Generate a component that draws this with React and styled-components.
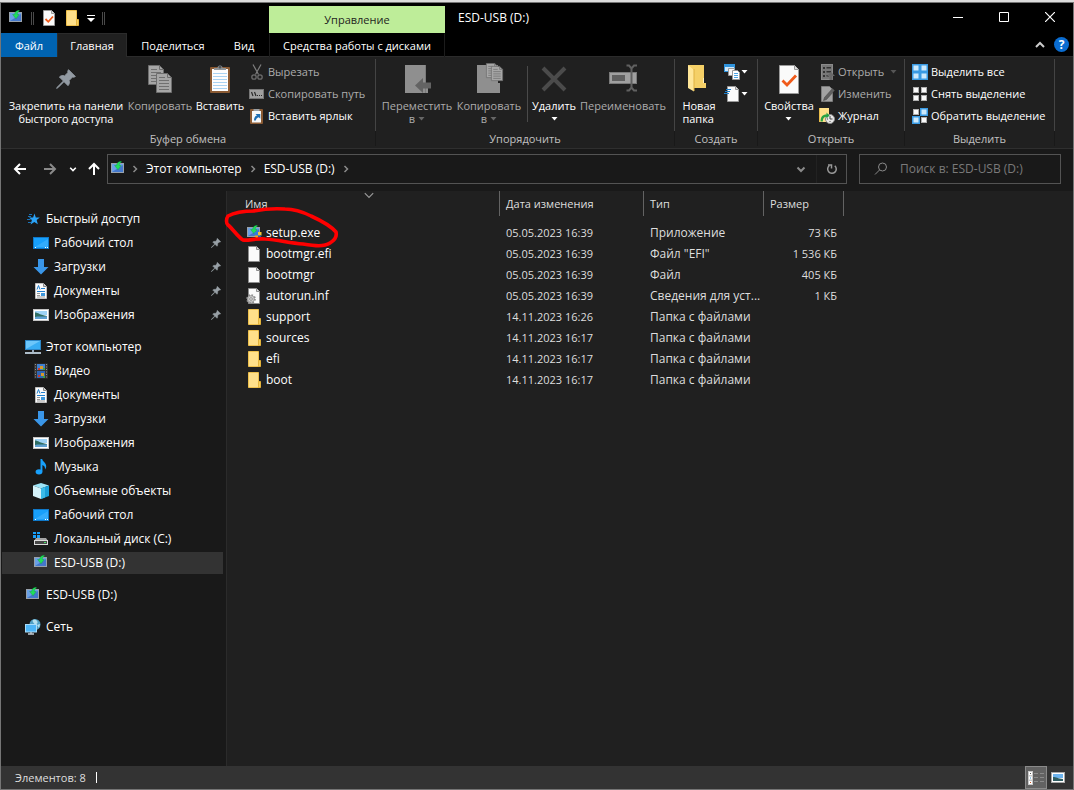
import React from 'react';
import styled, { createGlobalStyle, css } from 'styled-components';

const GlobalStyle = createGlobalStyle`
  *, *::before, *::after { box-sizing: border-box; }
  html, body { margin: 0; background: #191919; }
  body, button, input, table {
    font-family: "Open Sans", "Noto Sans", sans-serif;
    font-size: 12px;
    line-height: 16px;
    color: #fff;
  }
  button { margin: 0; padding: 0; border: 0; background: none; cursor: default; white-space: nowrap; }
  a { color: inherit; text-decoration: none; }
  svg { display: block; flex: none; }
`;

/* ---------- icons ---------- */

const Svg = ({ w = 16, h = w, vb, children }) => (
  <svg width={w} height={h} viewBox={vb || `0 0 ${w} ${h}`} fill="none" aria-hidden="true">
    {children}
  </svg>
);

const SetupIcon = ({ shield }) => (
  <Svg>
    <rect x="1.500" y="2.500" width="12" height="9" fill="#6aa0e6" stroke="#98a2ad" />
    <path d="M2 11L13 4v7z" fill="#4478cc" />
    <path d="M11 .2C8.200.6 6.800 2 6.600 4.500H4.600L8 8.800l3.200-4.300H9.200C9.300 3 9.800 1.700 11.500.9z" fill="#1fe05a" stroke="#0f9a3c" strokeWidth=".4" />
    {shield && (
      <g>
        <path d="M8.500 7H12v3.500H8.500z" fill="#2f7fe0" />
        <path d="M12 7h3.500v3.500H12z" fill="#f5c431" />
        <path d="M8.500 10.500H12V14Q9 13 8.500 10.500z" fill="#f5a31a" />
        <path d="M12 10.500h3.500Q15 13 12 14z" fill="#2360b8" />
      </g>
    )}
  </Svg>
);

const FolderIcon = () => (
  <Svg>
    <path d="M2.500.5h10v15h-10z" fill="#ffe08a" stroke="#eec04c" />
    <path d="M12.500 9.500h2v6h-2z" fill="#f6cf5f" stroke="#e3b33c" />
  </Svg>
);

const PageIcon = ({ gear }) => (
  <Svg>
    <path d="M2.500.5h8l3 3v12h-11z" fill="#fafafa" stroke="#8d8d8d" />
    <path d="M10.500.5v3h3" fill="#ddd" stroke="#8d8d8d" />
    {gear && (
      <g>
        <circle cx="5" cy="11" r="3.800" fill="#c4c4c4" stroke="#8a8a8a" strokeWidth="2" strokeDasharray="1.500 1.480" />
        <circle cx="5" cy="11" r="3.300" fill="#cfcfcf" stroke="#8a8a8a" strokeWidth=".6" />
        <circle cx="5" cy="11" r="1.300" fill="#fafafa" stroke="#777" strokeWidth=".8" />
      </g>
    )}
  </Svg>
);

const PropsSmallIcon = () => (
  <Svg>
    <path d="M2.500.5h8l3 3v12h-11z" fill="#fafafa" stroke="#999" />
    <path d="M10.500.5v3h3" fill="#ddd" stroke="#999" />
    <path d="M4.500 9l2.800 2.800L12 6.500" stroke="#f05a1a" strokeWidth="1.800" />
  </Svg>
);

const PinPath = ({ fill }) => (
  <path
    d="M10 .5L15.500 6l-1.300.6-1-.2-2.700 2.800c.5 1.600.2 3-.9 4.100L6.400 10.100 1.500 15 .5 15.500 1 14.500 5.900 9.600 2.700 6.400c1.100-1.100 2.500-1.400 4.100-.9l2.800-2.700-.2-1z"
    fill={fill}
    stroke={fill}
    strokeWidth=".7"
  />
);
const PinSmall = () => <Svg w={10} vb="0 0 16 16"><PinPath fill="#98a0a6" /></Svg>;
const PinLarge = () => (
  <Svg w={32}>
    <g transform="translate(6 6) scale(1.250)"><PinPath fill="#939ba3" /></g>
  </Svg>
);

const CopyDoc = ({ x, y }) => (
  <g transform={`translate(${x} ${y})`}>
    <path d="M.5.5h11l4 4v15H.5z" fill="#a6a6a6" stroke="#6e6e6e" />
    <path d="M11.500.5v4h4" stroke="#6e6e6e" />
    <path d="M3 4.500h6M3 7.500h10M3 10.500h10M3 13.500h10M3 16.500h10" stroke="#707070" />
  </g>
);
const CopyLarge = () => <Svg w={32}><CopyDoc x={4} y={2} /><CopyDoc x={12} y={10} /></Svg>;

const PasteLarge = () => (
  <Svg w={32}>
    <rect x="6" y="4" width="20" height="26" rx="1" fill="#8a5a33" />
    <path d="M8 6h16v22H8z" fill="#fdfdfd" />
    <path d="M9 10.500h14M9 13.500h14M9 16.500h14M9 19.500h14M9 22.500h14M9 25.500h14" stroke="#a9d3f3" />
    <path d="M10 7V5h3.500a2.500 2.500 0 015 0H22v2z" fill="#8e9499" />
    <circle cx="16" cy="4" r="1.500" fill="#4d5256" />
  </Svg>
);

const CutIcon = () => (
  <Svg>
    <path d="M4 .5l5.500 10M12 .5L6.500 10.500" stroke="#7f7f7f" strokeWidth="1.200" />
    <circle cx="5" cy="13" r="2.200" stroke="#6b6b6b" strokeWidth="1.300" />
    <circle cx="11" cy="13" r="2.200" stroke="#6b6b6b" strokeWidth="1.300" />
  </Svg>
);
const PathIcon = () => (
  <Svg>
    <rect x=".5" y="3.500" width="14" height="9" fill="#a0a0a0" stroke="#777" />
    <path d="M2.500 6l1.500 4M5.500 6L7 10" stroke="#2a2a2a" strokeWidth="1.200" />
    <path d="M8 9.500h1M10 9.500h1M12 9.500h1" stroke="#2a2a2a" />
  </Svg>
);
const ShortcutIcon = () => (
  <Svg>
    <rect x="1" y="1" width="13" height="15" rx="1" fill="#8a5a33" />
    <path d="M3 3h9v11.500H3z" fill="#f8f8f8" />
    <path d="M4.500 3V1h6v2z" fill="#999fa4" />
    <path d="M5 12.500c0-3 1-4.500 3-5L6.500 6h4.800v4.800L9.800 9.200C8 9.800 7 10.800 6.800 12.500z" fill="#1f6fb3" />
  </Svg>
);

const MoveLarge = () => (
  <Svg w={32}>
    <path d="M4 2h21v18h2v10H4z" fill="#8f8f8f" />
    <path d="M24.500 2v28" stroke="#7b7b7b" />
    <path d="M14 22.500L22 15v4.500h8v6h-8V30z" fill="#636363" />
  </Svg>
);
const CopyToLarge = () => (
  <Svg w={32}>
    <path d="M4 2h21v18h2v10H4z" fill="#8f8f8f" />
    <g transform="translate(13 0) scale(.75)"><CopyDoc x={0} y={0} /></g>
    <g transform="translate(18 3) scale(.75)"><CopyDoc x={0} y={0} /></g>
  </Svg>
);
const DeleteLarge = () => <Svg w={32}><path d="M5 5l22 22M27 5L5 27" stroke="#4b4b4b" strokeWidth="4" /></Svg>;
const RenameLarge = () => (
  <Svg w={32}>
    <rect x="2.500" y="9.500" width="27" height="11" fill="#a0a0a0" stroke="#7a7a7a" />
    <rect x="5" y="12" width="13" height="6" fill="#606060" />
    <path d="M24.500 6v19M19.500 2.500h2.500l2.500 3 2.500-3h3M19.500 27.500h2.500l2.500-3 2.500 3h3" stroke="#606060" strokeWidth="2" />
  </Svg>
);
const NewFolderLarge = () => (
  <Svg w={32}>
    <path d="M5 2h16v18h2v5H9z" fill="#f5d067" />
    <path d="M5 2l6 5v21.500L5 25z" fill="#ffe698" />
    <path d="M11 6v22" stroke="#dfb242" />
    <path d="M20.500 15v5" stroke="#fff1bd" />
  </Svg>
);
const NewItemIcon = () => (
  <Svg>
    <rect x=".5" y=".5" width="10" height="7" fill="#cfe8fa" stroke="#2f93dc" />
    <path d="M1 2h9" stroke="#2f93dc" strokeWidth="2" />
    <path d="M4.500 4.500h6v7h-6z" fill="#f4f4f4" stroke="#999" />
    <path d="M8.500 6.500h5l2 2v7h-7z" fill="#fff" stroke="#999" />
    <path d="M10 9.500h4M10 11.500h4M10 13.500h4" stroke="#4ba3e3" />
  </Svg>
);
const EasyAccessIcon = () => (
  <Svg>
    <path d="M3.500.5h8l3 3v12h-11z" fill="#fafafa" stroke="#999" />
    <path d="M11.500.5v3h3" fill="#ddd" stroke="#999" />
    <path d="M2 3.500h5M1 5.500h5M0 7.500h5" stroke="#1e7fc9" />
  </Svg>
);
const PropsLarge = () => (
  <Svg w={32}>
    <path d="M6.500 2.500h15l4 4v24h-19z" fill="#fafafa" stroke="#9a9a9a" />
    <path d="M21.500 2.500v4h4" fill="#ddd" stroke="#9a9a9a" />
    <path d="M9.500 17.500l4.500 4.500 9-9.500" stroke="#f05a1a" strokeWidth="2.800" />
  </Svg>
);
const OpenIcon = () => (
  <Svg>
    <rect x="2.500" y=".5" width="11" height="15" fill="#777" stroke="#8a8a8a" />
    <path d="M4 3h2v2H4zM4 7h2v2H4zM4 11h2v2H4zM7.500 3H12v1.500H7.500zM7.500 7H12v1.500H7.500zM7.500 11H10v1.500H7.500z" fill="#333" />
    <path d="M12 8l4 4h-2.500v4h-3v-4H8z" fill="#696969" />
  </Svg>
);
const EditIcon = () => (
  <Svg>
    <path d="M2.500.5h8l3 3v12h-11z" fill="#a3a3a3" stroke="#7b7b7b" />
    <path d="M13.500 2.500l2 2-8 9-3 1 1-3z" fill="#606060" stroke="#4a4a4a" strokeWidth=".6" />
  </Svg>
);
const HistoryIcon = () => (
  <Svg>
    <path d="M0 0h10v8l1 6H0z" fill="#ffe08a" />
    <path d="M.5 0v14" stroke="#e9bd4b" />
    <circle cx="11" cy="11" r="4.500" fill="#e8e8e8" stroke="#8b8b8b" />
    <path d="M11 8v3h2.500M11 14v-1M8 11h1" stroke="#444" />
    <path d="M1.500 13.500c0-4.500 2-7 6-7V4.500l3 3-3 3V8.800c-2.500 0-3.700 1.700-3.700 4.700z" fill="#27a243" />
  </Svg>
);

const SelectIcon = ({ kind }) => {
  const on = kind === 'all' ? [1, 1, 1, 1] : kind === 'none' ? [0, 0, 0, 0] : [0, 1, 1, 0];
  return (
    <Svg>
      {on.map((v, i) => {
        const x = (i % 2) * 8;
        const y = Math.floor(i / 2) * 8;
        return v ? (
          <g key={i}>
            <rect x={x} y={y} width="8" height="8" fill="#3a9be4" />
            <rect x={x + 1.5} y={y + 1.5} width="5" height="5" fill="#cde9fb" />
          </g>
        ) : (
          <rect key={i} x={x + 1.5} y={y + 1.5} width="5" height="5" fill="#fafafa" stroke="#b0b0b0" />
        );
      })}
    </Svg>
  );
};

const StarIcon = () => (
  <Svg>
    <path d="M9.500 2.500l1.300 4 4 .1-3.100 2.500 1.100 4.200-3.500-2.400-3.700 2.500 1.300-4.300L4 6.600l4.100-.1z" fill="#2ba3f7" />
    <path d="M4 3.500h3M3 5.500h3M2 8.500h3.500M3 11.500h3" stroke="#1b74b8" />
  </Svg>
);
const DesktopIcon = () => (
  <Svg>
    <rect x=".5" y="2.500" width="15" height="11" fill="#18a0fb" stroke="#0f78c8" />
    <path d="M2 12L15 4v8z" fill="#33acfc" />
    <path d="M2 12.500h1M12 12.500h1M14 12.500h1" stroke="#fff" />
  </Svg>
);
const DownloadIcon = () => <Svg><path d="M5 0h6v8h4.500L8 15.500.5 8H5z" fill="#3a96e8" /></Svg>;
const DocIcon = () => (
  <Svg>
    <path d="M2.500.5h8l3 3v12h-11z" fill="#fafafa" stroke="#c0c0c0" />
    <path d="M10.500.5v3h3" fill="#ccc" stroke="#888" />
    <path d="M4 6.500L5.500 2.500 7 6.500M8 5.500h4M4 8.500h8" stroke="#1f7fcf" />
    <path d="M4 10.500h3M4 12.500h3M4 14h8" stroke="#999" />
    <path d="M8 10h4v3H8z" fill="#3d97dc" />
  </Svg>
);
const PictureIcon = () => (
  <Svg>
    <rect x=".5" y="2.500" width="15" height="11" fill="#fff" stroke="#c4c4c4" />
    <path d="M2 4h12v4H2z" fill="#9fd3f5" />
    <path d="M2 5.500c3 0 5 2.500 12 3.500v2H2z" fill="#2f6d62" />
    <path d="M2 10c4-1 8 0 12-.8V12H2z" fill="#5fa0d0" />
  </Svg>
);
const PcIcon = () => (
  <Svg>
    <rect x=".5" y="1.500" width="15" height="9" fill="#6cc6fa" stroke="#2b86c7" />
    <path d="M1 10L15 2v8z" fill="#38adf4" />
    <path d="M7 11h2v2H7z" fill="#9ab" />
    <path d="M0 14h16" stroke="#aebdc9" strokeWidth="2" />
  </Svg>
);
const VideoIcon = () => (
  <Svg>
    <rect x="1" y=".5" width="14" height="15" fill="#333" />
    <path d="M2.500 1v14M13.500 1v14" stroke="#8f8f8f" strokeWidth="1" strokeDasharray="1 1.500" />
    <rect x="4" y="1" width="8" height="6" fill="#3f7fd0" />
    <rect x="4" y="8" width="8" height="7" fill="#2f66b5" />
    <path d="M7 3h3v3H7zM8 10h3v3H8z" fill="#d79a2b" />
    <path d="M5 5h2v2H5zM5 12h2v2H5z" fill="#c8392c" />
    <path d="M10 5h2v2h-2zM10 13h2v2h-2z" fill="#3f9e45" />
  </Svg>
);
const MusicIcon = () => (
  <Svg>
    <path d="M7.500 0h1.700c.3 2.800 4 3.600 4 7.300 0 1.300-.5 2.300-1.200 3.200.3-2.300-.7-3.900-2.600-4.500v6.500H7.500z" fill="#18a0fb" />
    <ellipse cx="6" cy="12.800" rx="3.400" ry="2.600" fill="#18a0fb" />
  </Svg>
);
const CubeIcon = () => (
  <Svg>
    <path d="M8 0l8 2.500L8 5.500 0 2.500z" fill="#9ce4f7" />
    <path d="M0 2.500l8 3V16l-8-3z" fill="#d5f2fa" />
    <path d="M16 2.500l-8 3V16l8-3z" fill="#1b9fd8" />
    <path d="M8 5.500l4-1.500v10.500L8 16z" fill="#3bbbe8" />
  </Svg>
);
const DiskIcon = () => (
  <Svg>
    <path d="M0 1h3v2H0zM4 1h3v2H4zM0 4h3v3H0zM4 4h3v3H4z" fill="#18a0fb" />
    <path d="M3 7h10l2 3H1z" fill="#a5a5a5" />
    <rect x="1.500" y="9.500" width="13" height="4" fill="#484848" stroke="#dcdcdc" />
    <path d="M11 11.500h2" stroke="#4be36a" />
  </Svg>
);
const NetworkIcon = () => (
  <Svg>
    <circle cx="10" cy="5.500" r="5.500" fill="#4f9fc4" />
    <path d="M8 1c2-1 4 0 4.500 2S10 6 9 4.500 7 2 8 1zM12 6l3-1-1 4z" fill="#b5e0ef" />
    <rect x=".5" y="5.500" width="11" height="7.500" fill="#4db5f7" stroke="#a9dcfa" />
    <path d="M3 15h6M6 13v2" stroke="#c3ccd3" strokeWidth="1.300" />
  </Svg>
);

const Chevron = ({ dir = 'down', w = 10, stroke = '#fff', sw = 2 }) => (
  <svg width={w} height={w} viewBox="0 0 10 10" fill="none" aria-hidden="true">
    <path
      d={{ down: 'M1.500 3.500L5 7l3.500-3.500', up: 'M1 7l4-4 4 4', right: 'M3.500 2l3 3-3 3' }[dir]}
      stroke={stroke}
      strokeWidth={sw}
    />
  </svg>
);
const Caret = ({ fill = '#fff' }) => <Svg w={7} h={4}><path d="M.5 0h6L3.500 3.500z" fill={fill} /></Svg>;
const Arrow = ({ turn, stroke }) => (
  <Svg w={14}>
    <path transform={`rotate(${turn} 7 7)`} d="M13 7H2M7 2L2 7l5 5" stroke={stroke} strokeWidth="2" />
  </Svg>
);

/* ---------- window chrome ---------- */

const Page = styled.div`
  min-height: 100vh;
  display: flex;
  flex-direction: column;
  background: #dcdcdc;
  padding-top: 2px;
`;

const Window = styled.main`
  flex: 1;
  display: flex;
  flex-direction: column;
  border: 1px solid #757575;
  background: #191919;
  overflow: hidden;
`;

const TitleBar = styled.header`
  display: flex;
  height: 30px;
  background: #000;
`;

const QuickBar = styled.div`
  width: 268px;
  display: flex;
  align-items: center;
  gap: 7px;
  padding-left: 7px;
`;

const QuickButton = styled.button`
  display: grid;
  place-items: center;
  height: 20px;
`;

const Grip = styled.span`
  width: 3px;
  height: 13px;
  border: solid #4a4a4a;
  border-width: 0 1px;
`;

const ContextHeader = styled.div`
  width: 176px;
  margin-top: 3px;
  background: #beed99;
  color: #1e1e1e;
  font-size: 11px;
  display: flex;
  align-items: center;
  justify-content: center;
`;

const WindowTitle = styled.h1`
  flex: 1;
  margin: 0;
  padding-left: 13px;
  font-size: 12px;
  font-weight: 400;
  line-height: 30px;
`;

const WindowButton = styled.button`
  width: 46px;
  height: 28px;
  display: grid;
  place-items: center;
`;

const TabBar = styled.nav`
  display: flex;
  height: 24px;
  background: #000;
  border-bottom: 1px solid #2b2b2b;
`;

const Tab = styled.button`
  width: ${(p) => p.$w}px;
  height: 24px;
  border: solid transparent;
  border-width: 1px 1px 0;
  font-size: 11px;
  ${(p) => p.$file && css`background: #0063b1;`}
  ${(p) => p.$active && css`background: #202020; border-color: #2b2b2b;`}
  ${(p) => p.$context && css`border-color: #1c1c1c; border-top-color: transparent;`}
`;

const TabTools = styled.div`
  margin-left: auto;
  display: flex;
  align-items: center;
  gap: 9px;
  padding-right: 4px;
`;

const HelpBadge = styled.button`
  width: 15px;
  height: 15px;
  border-radius: 8px;
  background: #0a6cd0;
  font-weight: 700;
  line-height: 15px;
`;

/* ---------- ribbon ---------- */

const Ribbon = styled.section`
  display: flex;
  height: 92px;
  background: #202020;
  border-bottom: 1px solid #2f2f2f;
`;

const Group = styled.section`
  width: ${(p) => p.$w}px;
  display: flex;
  flex-direction: column;
  padding-top: 2px;
`;

const GroupBody = styled.div`
  height: 72px;
  display: flex;
  padding-left: ${(p) => p.$pad || 0}px;
  border-right: 1px solid #444;
`;

const GroupName = styled.h2`
  height: 15px;
  margin: 0;
  border-right: 1px solid #191919;
  font-size: 11px;
  font-weight: 400;
  line-height: 16px;
  text-align: center;
  color: #c0c0c0;
`;

const BigButton = styled.button`
  width: ${(p) => p.$w}px;
  display: flex;
  flex-direction: column;
  align-items: center;
  padding-top: 4px;
  font-size: 11px;
  color: ${(p) => (p.$off ? '#acacac' : '#fff')};
`;

const BigLabel = styled.span`
  margin-top: 4px;
  line-height: 13px;
  text-align: ${(p) => (p.$left ? 'left' : 'center')};
`;

const CaretLine = styled.span`
  display: flex;
  align-items: center;
  justify-content: center;
  gap: 3px;
  height: 13px;
`;

const SmallStack = styled.div`
  display: flex;
  flex-direction: column;
  margin-left: ${(p) => p.$gap || 0}px;
`;

const SmallButton = styled.button`
  height: 22px;
  margin-top: ${(p) => (p.$first ? 2 : 0)}px;
  display: flex;
  align-items: center;
  gap: ${(p) => (p.$tight ? 1 : 3)}px;
  font-size: 11px;
  color: ${(p) => (p.$off ? '#acacac' : '#fff')};
`;

const InnerRule = styled.span`
  width: 1px;
  height: 56px;
  margin: 7px 0 0 3px;
  background: #4a4a4a;
`;

/* ---------- address row ---------- */

const AddressRow = styled.div`
  display: flex;
  align-items: center;
  height: 42px;
  padding: 0 12px 2px 11px;
`;

const NavButton = styled.button`
  width: ${(p) => p.$w || 16}px;
  height: 28px;
  margin-left: ${(p) => p.$gap || 0}px;
  display: grid;
  place-items: center;
`;

const AddressBox = styled.div`
  flex: 1;
  height: 30px;
  margin-left: 5px;
  display: flex;
  align-items: center;
  border: 1px solid #535353;
  padding-left: 2px;
`;

const Crumb = styled.a`
  margin: 0 6px;
`;

const Crumbs = styled.nav`
  flex: 1;
  display: flex;
  align-items: center;
  padding-left: 4px;
`;

const BoxButton = styled.button`
  width: 30px;
  height: 28px;
  display: grid;
  place-items: center;
  ${(p) => p.$rule && css`border-left: 1px solid #222;`}
`;

const SearchBox = styled.label`
  width: 202px;
  height: 30px;
  margin-left: 12px;
  display: flex;
  align-items: center;
  gap: 12px;
  padding-left: 14px;
  border: 1px solid #535353;
`;

const SearchInput = styled.input`
  flex: 1;
  min-width: 0;
  border: 0;
  padding: 0;
  outline: 0;
  background: transparent;
  &::placeholder { color: #7a7a7a; opacity: 1; }
`;

/* ---------- content ---------- */

const Content = styled.div`
  flex: 1;
  display: flex;
`;

const Sidebar = styled.nav`
  width: 226px;
  padding: 16px 3px 0 1px;
  border-right: 1px solid #2b2b2b;
`;

const TreeList = styled.ul`
  list-style: none;
  margin: 0 0 8px;
  padding: 0;
`;

const TreeLink = styled.a`
  height: 24px;
  display: flex;
  align-items: center;
  gap: 5px;
  padding: 0 2px 0 ${(p) => (p.$child ? 31 : 23)}px;
  ${(p) => p.$current && css`background: linear-gradient(#333, #333) 0 1px / 100% 22px no-repeat;`}
  & > span { flex: 1; }
`;

const Files = styled.div`
  flex: 1;
  position: relative;
  background: #202020;
`;

const FileTable = styled.table`
  width: 617px;
  table-layout: fixed;
  border-collapse: separate;
  border-spacing: 0;
`;

const HeadCell = styled.th`
  position: relative;
  width: ${(p) => p.$w}px;
  height: 25px;
  padding: 0 0 0 ${(p) => p.$pad || 6}px;
  border-right: 1px solid #636363;
  text-align: left;
  font-size: 11px;
  font-weight: 400;
  color: #dedede;
`;

const SortMark = styled.span`
  position: absolute;
  top: -2px;
  left: 50%;
`;

const FileRows = styled.tbody`
  &::before { content: ""; display: block; height: 6px; }
`;

const Cell = styled.td`
  height: 21px;
  padding: 0 7px 0 6px;
  white-space: nowrap;
  font-size: ${(p) => (p.$figures ? 11 : 12)}px;
  text-align: ${(p) => (p.$right ? 'right' : 'left')};
  color: #dedede;
`;

const FileName = styled.a`
  display: flex;
  align-items: center;
  gap: 4px;
  padding-left: 13px;
  color: #fff;
`;

const Scribble = styled.svg`
  position: absolute;
  left: 0;
  top: 16px;
  overflow: visible;
  pointer-events: none;
`;

const StatusBar = styled.footer`
  height: 23px;
  display: flex;
  align-items: center;
  padding: 0 4px 0 14px;
  background: #333;
  font-size: 11px;
  color: #dedede;
`;

const StatusRule = styled.span`
  width: 1px;
  height: 11px;
  margin-left: 10px;
  background: #fff;
`;

const ViewButtons = styled.div`
  margin-left: auto;
  display: flex;
`;

const ViewButton = styled.button`
  width: 22px;
  height: 23px;
  display: grid;
  place-items: center;
  ${(p) => p.$on && css`background: #626262; border: 1px solid #8a8a8a;`}
`;

/* ---------- data ---------- */

const quick = [
  ['Рабочий стол', DesktopIcon],
  ['Загрузки', DownloadIcon],
  ['Документы', DocIcon],
  ['Изображения', PictureIcon],
];
const computer = [
  ['Видео', VideoIcon],
  ['Документы', DocIcon],
  ['Загрузки', DownloadIcon],
  ['Изображения', PictureIcon],
  ['Музыка', MusicIcon],
  ['Объемные объекты', CubeIcon],
  ['Рабочий стол', DesktopIcon],
  ['Локальный диск (C:)', DiskIcon],
  ['ESD-USB (D:)', SetupIcon],
];
const files = [
  ['setup.exe', '05.05.2023 16:39', 'Приложение', '73 КБ', <SetupIcon shield />],
  ['bootmgr.efi', '05.05.2023 16:39', 'Файл "EFI"', '1 536 КБ', <PageIcon />],
  ['bootmgr', '05.05.2023 16:39', 'Файл', '405 КБ', <PageIcon />],
  ['autorun.inf', '05.05.2023 16:39', 'Сведения для уст...', '1 КБ', <PageIcon gear />],
  ['support', '14.11.2023 16:26', 'Папка с файлами', '', <FolderIcon />],
  ['sources', '14.11.2023 16:17', 'Папка с файлами', '', <FolderIcon />],
  ['efi', '14.11.2023 16:17', 'Папка с файлами', '', <FolderIcon />],
  ['boot', '14.11.2023 16:17', 'Папка с файлами', '', <FolderIcon />],
];

const Big = ({ w, off, icon, left, children }) => (
  <BigButton $w={w} $off={off} disabled={off}>
    {icon}
    <BigLabel $left={left}>{children}</BigLabel>
  </BigButton>
);
const Small = ({ first, off, icon, tight, label, children }) => (
  <SmallButton $first={first} $off={off} $tight={tight} disabled={off} aria-label={label}>
    {icon}
    {children}
  </SmallButton>
);
const TreeItem = ({ icon: Icon, label, child, pinned, current }) => (
  <li>
    <TreeLink href="#" $child={child} $current={current}>
      <Icon />
      <span>{label}</span>
      {pinned && <PinSmall />}
    </TreeLink>
  </li>
);

export default function App() {
  return (
    <Page>
      <GlobalStyle />
      <Window>
        <TitleBar>
          <QuickBar>
            <SetupIcon />
            <Grip />
            <QuickButton aria-label="Свойства"><PropsSmallIcon /></QuickButton>
            <QuickButton aria-label="Новая папка"><FolderIcon /></QuickButton>
            <QuickButton aria-label="Настройка панели">
              <Svg w={8} h={7}><path d="M0 .5h8" stroke="#fff" /><path d="M0 3h8L4 7z" fill="#fff" /></Svg>
            </QuickButton>
            <Grip />
          </QuickBar>
          <ContextHeader>Управление</ContextHeader>
          <WindowTitle>ESD-USB (D:)</WindowTitle>
          <WindowButton aria-label="Свернуть"><Svg w={10}><path d="M0 5.500h10" stroke="#fff" /></Svg></WindowButton>
          <WindowButton aria-label="Развернуть"><Svg w={10}><path d="M.5.5h9v9h-9z" stroke="#fff" /></Svg></WindowButton>
          <WindowButton aria-label="Закрыть"><Svg w={10}><path d="M0 0l10 10M10 0L0 10" stroke="#fff" strokeWidth="1.200" /></Svg></WindowButton>
        </TitleBar>
        <TabBar>
          <Tab $w={56} $file>Файл</Tab>
          <Tab $w={70} $active>Главная</Tab>
          <Tab $w={92}>Поделиться</Tab>
          <Tab $w={50}>Вид</Tab>
          <Tab $w={176} $context>Средства работы с дисками</Tab>
          <TabTools>
            <Chevron dir="up" stroke="#ccc" />
            <HelpBadge aria-label="Справка">?</HelpBadge>
          </TabTools>
        </TabBar>

        <Ribbon>
          <Group $w={375}>
            <GroupBody $pad={4}>
              <Big w={122} icon={<PinLarge />}>Закрепить на панели<br />быстрого доступа</Big>
              <Big w={66} off icon={<CopyLarge />}>Копировать</Big>
              <Big w={54} icon={<PasteLarge />}>Вставить</Big>
              <SmallStack $gap={2}>
                <Small first off icon={<CutIcon />}>Вырезать</Small>
                <Small off icon={<PathIcon />}>Скопировать путь</Small>
                <Small icon={<ShortcutIcon />}>Вставить ярлык</Small>
              </SmallStack>
            </GroupBody>
            <GroupName>Буфер обмена</GroupName>
          </Group>
          <Group $w={299}>
            <GroupBody $pad={4}>
              <Big w={74} off icon={<MoveLarge />}>
                Переместить<CaretLine>в <Caret fill="#666" /></CaretLine>
              </Big>
              <Big w={70} off icon={<CopyToLarge />}>
                Копировать<CaretLine>в <Caret fill="#666" /></CaretLine>
              </Big>
              <InnerRule />
              <Big w={52} icon={<DeleteLarge />}>Удалить<CaretLine><Caret /></CaretLine></Big>
              <Big w={86} off icon={<RenameLarge />}>Переименовать</Big>
            </GroupBody>
            <GroupName>Упорядочить</GroupName>
          </Group>
          <Group $w={83}>
            <GroupBody $pad={4}>
              <Big w={40} left icon={<NewFolderLarge />}>Новая<br />папка</Big>
              <SmallStack $gap={5}>
                <Small first tight label="Создать элемент" icon={<NewItemIcon />}><Caret /></Small>
                <Small tight label="Простой доступ" icon={<EasyAccessIcon />}><Caret /></Small>
              </SmallStack>
            </GroupBody>
            <GroupName>Создать</GroupName>
          </Group>
          <Group $w={147}>
            <GroupBody $pad={4}>
              <Big w={54} icon={<PropsLarge />}>Свойства<CaretLine><Caret /></CaretLine></Big>
              <SmallStack $gap={3}>
                <Small first off icon={<OpenIcon />}>Открыть&nbsp;<Caret fill="#555" /></Small>
                <Small off icon={<EditIcon />}>Изменить</Small>
                <Small icon={<HistoryIcon />}>Журнал</Small>
              </SmallStack>
            </GroupBody>
            <GroupName>Открыть</GroupName>
          </Group>
          <Group $w={150}>
            <GroupBody $pad={7}>
              <SmallStack>
                <Small first icon={<SelectIcon kind="all" />}>Выделить все</Small>
                <Small icon={<SelectIcon kind="none" />}>Снять выделение</Small>
                <Small icon={<SelectIcon kind="invert" />}>Обратить выделение</Small>
              </SmallStack>
            </GroupBody>
            <GroupName>Выделить</GroupName>
          </Group>
        </Ribbon>

        <AddressRow>
          <NavButton aria-label="Назад"><Arrow turn={0} stroke="#fff" /></NavButton>
          <NavButton $gap={14} aria-label="Вперед"><Arrow turn={180} stroke="#8a8a8a" /></NavButton>
          <NavButton $gap={10} $w={10} aria-label="Последние расположения"><Chevron w={8} /></NavButton>
          <NavButton $gap={8} aria-label="Вверх"><Arrow turn={90} stroke="#fff" /></NavButton>
          <AddressBox>
            <SetupIcon />
            <Crumbs aria-label="Путь">
              <Chevron dir="right" stroke="#8a8a8a" sw={1.500} />
              <Crumb href="#">Этот компьютер</Crumb>
              <Chevron dir="right" stroke="#8a8a8a" sw={1.500} />
              <Crumb href="#">ESD-USB (D:)</Crumb>
              <Chevron dir="right" stroke="#8a8a8a" sw={1.500} />
            </Crumbs>
            <BoxButton aria-label="Предыдущие расположения"><Chevron stroke="#8a8a8a" /></BoxButton>
            <BoxButton $rule aria-label="Обновить">
              <Svg w={12}>
                <path d="M8.800 2.800A4.300 4.300 0 113.500 2.500" stroke="#999" strokeWidth="1.500" />
                <path d="M2 2h3.500v3.500" stroke="#999" strokeWidth="1.500" />
              </Svg>
            </BoxButton>
          </AddressBox>
          <SearchBox>
            <Svg w={14}>
              <circle cx="8.500" cy="5" r="4" stroke="#8a8a8a" />
              <path d="M5.500 8L1 12.500" stroke="#8a8a8a" />
            </Svg>
            <SearchInput type="text" aria-label="Поиск" placeholder="Поиск в: ESD-USB (D:)" />
          </SearchBox>
        </AddressRow>

        <Content>
          <Sidebar aria-label="Папки">
            <TreeList>
              <TreeItem icon={StarIcon} label="Быстрый доступ" />
              {quick.map(([label, icon]) => <TreeItem key={label} icon={icon} label={label} child pinned />)}
            </TreeList>
            <TreeList>
              <TreeItem icon={PcIcon} label="Этот компьютер" />
              {computer.map(([label, icon]) => (
                <TreeItem key={label} icon={icon} label={label} child current={label === 'ESD-USB (D:)'} />
              ))}
            </TreeList>
            <TreeList><TreeItem icon={SetupIcon} label="ESD-USB (D:)" /></TreeList>
            <TreeList><TreeItem icon={NetworkIcon} label="Сеть" /></TreeList>
          </Sidebar>
          <Files>
            <FileTable>
              <thead>
                <tr>
                  <HeadCell $w={273} $pad={18}>
                    Имя
                    <SortMark><Chevron w={12} stroke="#999" sw={1} /></SortMark>
                  </HeadCell>
                  <HeadCell $w={144}>Дата изменения</HeadCell>
                  <HeadCell $w={120}>Тип</HeadCell>
                  <HeadCell $w={80}>Размер</HeadCell>
                </tr>
              </thead>
              <FileRows>
                {files.map(([name, date, type, size, icon]) => (
                  <tr key={name}>
                    <Cell><FileName href="#">{icon}{name}</FileName></Cell>
                    <Cell $figures>{date}</Cell>
                    <Cell>{type}</Cell>
                    <Cell $figures $right>{size}</Cell>
                  </tr>
                ))}
              </FileRows>
            </FileTable>
            <Scribble width="112" height="42" viewBox="0 0 112 42" fill="none" aria-hidden="true">
              <path
                d="M28 4C18 4 8 5 1 9C-1 12-1 16 1 18C6 22 10 29 16 33C22 34 28 31 38 32C52 33 62 36 76 37C88 39 97 40 103 36C108 33 110 29 109 25C103 18 95 14 84 9C76 5 68 2 58 2Q42 1 26 4"
                stroke="#f00"
                strokeWidth="3.600"
                strokeLinejoin="round"
              />
            </Scribble>
          </Files>
        </Content>

        <StatusBar>
          <span>Элементов: 8</span>
          <StatusRule />
          <ViewButtons>
            <ViewButton $on aria-label="Таблица">
              <Svg w={16} h={14}>
                <path d="M0 0h5v14H0z" fill="#c8c8c8" />
                <path d="M1 1h3v3H1zM1 5.500h3v3H1zM1 10h3v3H1z" fill="#fff" />
                <path d="M2 2.500h1" stroke="#555" /><path d="M2 7h1" stroke="#28c" /><path d="M2 11.500h1" stroke="#c52" />
                <path d="M6 2.500h4M12 2.500h4M6 6.500h4M12 6.500h4M6 10.500h4M12 10.500h4" stroke="#8a8a8a" />
              </Svg>
            </ViewButton>
            <ViewButton aria-label="Крупные значки">
              <Svg w={14} h={11}>
                <rect x=".5" y=".5" width="13" height="10" fill="#fff" stroke="#a8a8a8" />
                <path d="M2 2h10v4H2z" fill="#6db4ee" />
                <path d="M2 5c3 0 5 1.500 10 2v2H2z" fill="#2f5d62" />
              </Svg>
            </ViewButton>
          </ViewButtons>
        </StatusBar>
      </Window>
    </Page>
  );
}
